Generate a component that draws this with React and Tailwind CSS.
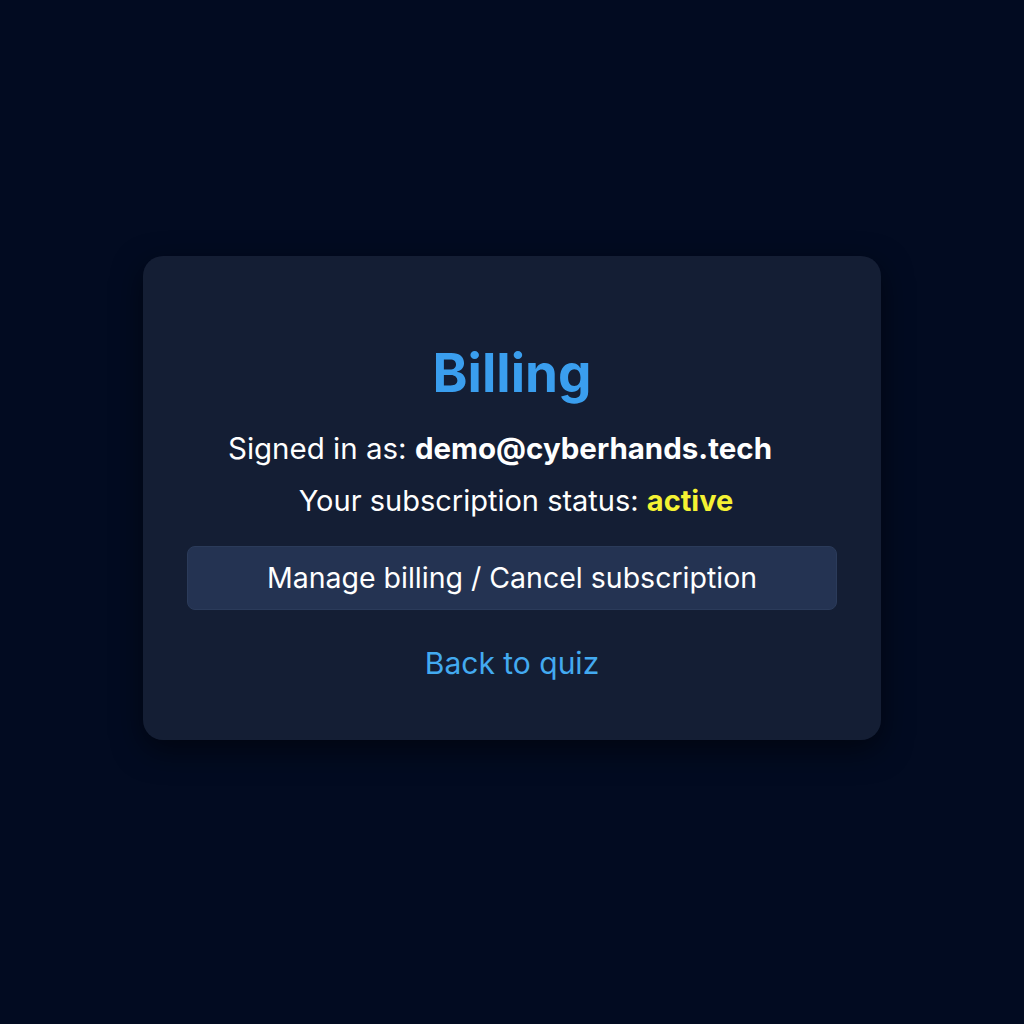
export default function App() {
  return (
    <div className="min-h-screen w-full bg-[#020b21] flex items-start justify-center pt-[256px]" style={{ fontFamily: "Inter, 'Noto Sans', sans-serif" }}>
      <div className="w-[738px] h-[484px] rounded-[20px] bg-[#141e34] shadow-[0_10px_30px_rgba(0,0,0,0.5)] px-[44px] pt-[86px] flex flex-col items-center">
        <h1 className="text-[53px] leading-[62px] font-bold text-[#3a9eee]">Billing</h1>
        <p className="mt-[26px] text-[29.5px] leading-[36px] text-white pr-[24px]">
          Signed in as: <span className="font-bold">demo@cyberhands.tech</span>
        </p>
        <p className="mt-[17px] text-[29px] leading-[36px] text-white pl-[8px]">
          Your subscription status: <span className="font-bold text-[#f5f233]">active</span>
        </p>
        <button className="mt-[27px] w-full h-[64px] rounded-[8px] bg-[#243352] border border-[#2b3b5a] text-white text-[28.5px]">
          Manage billing / Cancel subscription
        </button>
        <a className="mt-[35px] text-[30px] leading-[36px] text-[#43aaf0]">Back to quiz</a>
      </div>
    </div>
  );
}
